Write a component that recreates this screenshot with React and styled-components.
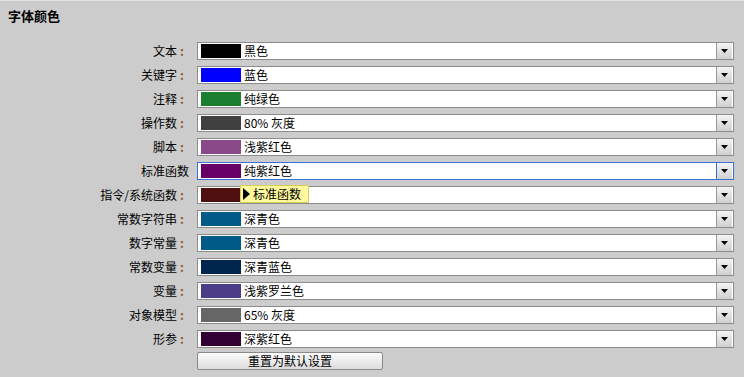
import React from "react";
import styled, { createGlobalStyle } from "styled-components";

const Global = createGlobalStyle`
  html, body { margin: 0; padding: 0; background: #cccccc; }
  body { font-family: "Noto Sans CJK SC", "Noto Sans", sans-serif; font-size: 12px; color: #000; }
`;

const Page = styled.div`
  width: 744px;
  height: 377px;
  box-sizing: border-box;
  padding: 6px 10px 0 0;
  border-top: 1px solid #e2e2e2;
  overflow: hidden;
`;

const Title = styled.h2`
  margin: 0 0 0 8px;
  font-size: 13px;
  font-weight: bold;
  line-height: 18px;
  height: 18px;
`;

const Form = styled.div`
  margin-top: 17px;
  display: grid;
  grid-template-columns: 189px 537px;
  column-gap: 8px;
  row-gap: 6px;
  align-items: center;
`;

const Label = styled.div`
  text-align: right;
  line-height: 18px;
  white-space: nowrap;
`;

const Colon = styled.span`
  display: inline-block;
  width: 12px;
  box-sizing: border-box;
  padding-left: 3px;
  text-align: left;
  color: #8b5a2b;
  font-weight: bold;
`;

const Field = styled.div`
  position: relative;
  height: 18px;
  box-sizing: border-box;
  border: 1px solid ${(p) => (p.$active ? "#3a6fd8" : "#8c8c8c")};
  background: #fff;
  display: flex;
  align-items: center;
  padding-left: 3px;
`;

const Swatch = styled.div`
  width: 40px;
  height: 14px;
  flex: none;
  background: ${(p) => p.$color};
`;

const Value = styled.span`
  margin-left: 3px;
  line-height: 16px;
  flex: 1;
  white-space: nowrap;
`;

const DropBtn = styled.div`
  width: 16px;
  height: 16px;
  flex: none;
  box-sizing: border-box;
  border-left: 1px solid ${(p) => (p.$active ? "#3a6fd8" : "#9a9a9a")};
  background: linear-gradient(#f4f4f4, #d0d0d0);
  display: flex;
  align-items: center;
  justify-content: center;
  margin-right: 1px;
`;

const Tip = styled.div`
  position: absolute;
  left: 42px;
  top: -2px;
  height: 18px;
  width: 69px;
  box-sizing: border-box;
  background: #fff89c;
  border: 1px solid #d9cc58;
  display: flex;
  align-items: center;
  padding-left: 2px;
  gap: 3px;
  line-height: 16px;
  white-space: nowrap;
`;

const ResetButton = styled.button`
  grid-column: 2;
  justify-self: start;
  width: 186px;
  height: 18px;
  margin-top: -2px;
  padding: 0;
  border: 1px solid #8a8a8a;
  border-radius: 2px;
  background: linear-gradient(#fbfbfb, #dcdcdc);
  font-family: "Noto Sans CJK SC", "Noto Sans", sans-serif;
  font-size: 12px;
  color: #000;
  line-height: 16px;
`;

const Arrow = () => (
  <svg width="7" height="4" viewBox="0 0 7 4">
    <path d="M0 0 H7 L3.5 4 Z" fill="#000" />
  </svg>
);

const rows = [
  ["文本", "#000000", "黑色"],
  ["关键字", "#0000ff", "蓝色"],
  ["注释", "#1b7f2f", "纯绿色"],
  ["操作数", "#404040", "80% 灰度"],
  ["脚本", "#8a4a8a", "浅紫红色"],
  ["标准函数", "#660066", "纯紫红色", "active"],
  ["指令/系统函数", "#501010", "", "tip"],
  ["常数字符串", "#005a87", "深青色"],
  ["数字常量", "#005a87", "深青色"],
  ["常数变量", "#00264d", "深青蓝色"],
  ["变量", "#4b3d87", "浅紫罗兰色"],
  ["对象模型", "#666666", "65% 灰度"],
  ["形参", "#330033", "深紫红色"],
];

export default function App() {
  return (
    <Page>
      <Global />
      <Title>字体颜色</Title>
      <Form>
        {rows.map(([label, color, value, flag]) => (
          <React.Fragment key={label}>
            <Label>
              {label}
              {flag !== "active" && <Colon>:</Colon>}
            </Label>
            <Field $active={flag === "active"}>
              <Swatch $color={color} />
              <Value>{value}</Value>
              <DropBtn $active={flag === "active"}>
                <Arrow />
              </DropBtn>
              {flag === "tip" && (
                <Tip>
                  <svg width="7" height="12" viewBox="0 0 7 12">
                    <path d="M0 0 L7 6 L0 12 Z" fill="#000" />
                  </svg>
                  标准函数
                </Tip>
              )}
            </Field>
          </React.Fragment>
        ))}
        <ResetButton>重置为默认设置</ResetButton>
      </Form>
    </Page>
  );
}
